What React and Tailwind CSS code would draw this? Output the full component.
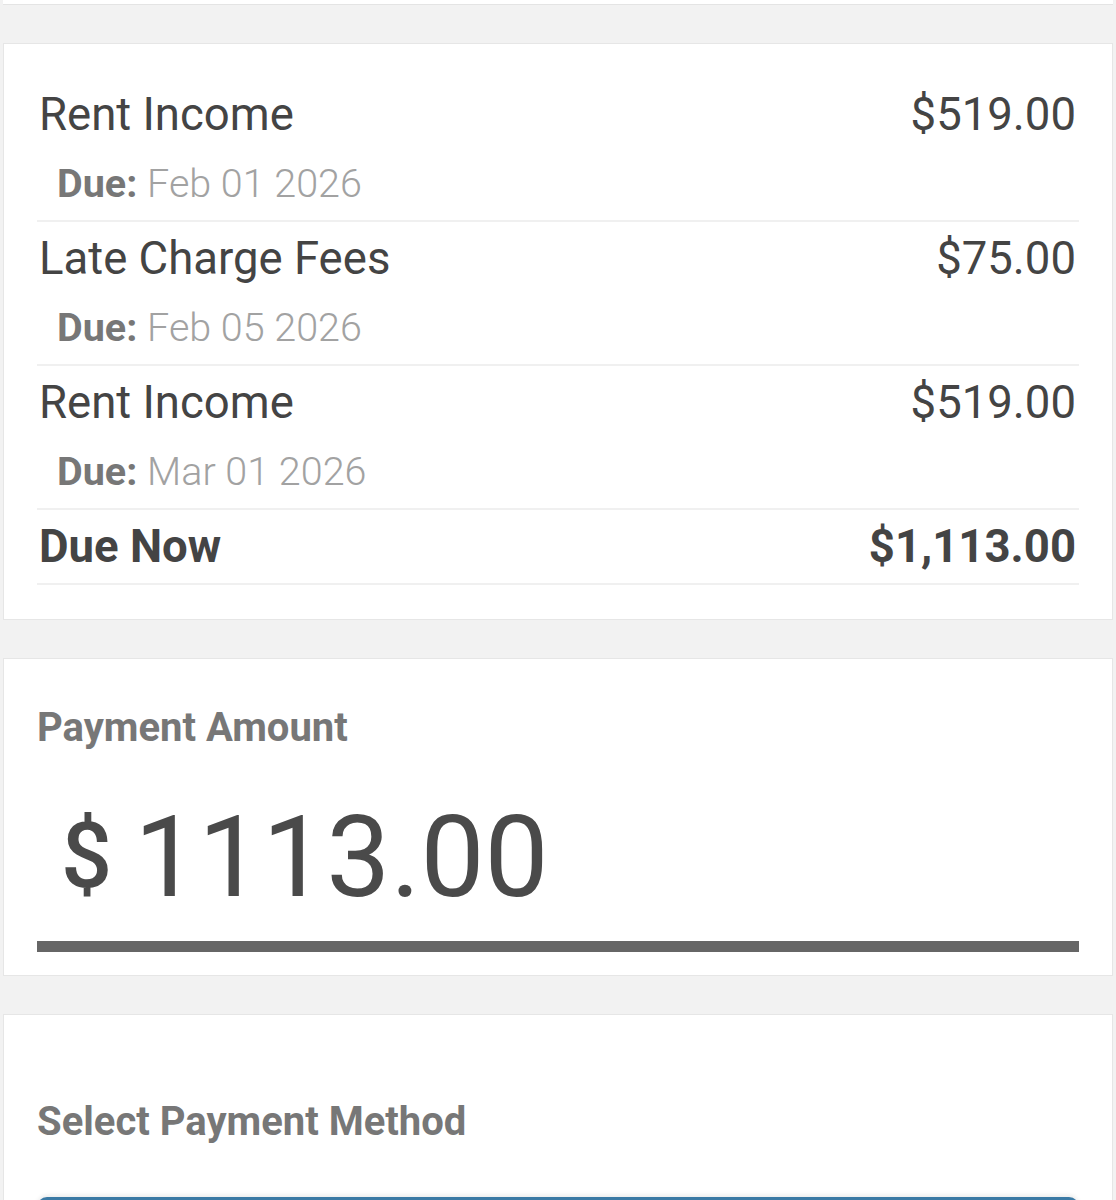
export default function App() {
  const rows = [
    { label: "Rent Income", amount: "$519.00", due: "Feb 01 2026" },
    { label: "Late Charge Fees", amount: "$75.00", due: "Feb 05 2026" },
    { label: "Rent Income", amount: "$519.00", due: "Mar 01 2026" },
  ];
  return (
    <div
      className="min-h-[1200px] bg-[#f2f2f2] text-[#444444]"
      style={{ fontFamily: "Roboto, 'Noto Sans', Arial, sans-serif" }}
    >
      <div className="mx-[3px] h-[5px] border-b border-[#e4e4e4] bg-white" />

      {/* Charges card */}
      <div className="mx-[3px] mt-[38px] border border-[#e6e6e6] bg-white px-[33px] pt-[43px] pb-[34px]">
        {rows.map((r, i) => (
          <div
            key={i}
            className={`border-b-2 border-[#f0f0f0] pb-[8px] ${i === 0 ? "" : "pt-[9px]"}`}
          >
            <div className="flex items-center justify-between pr-[3px] pl-[2px] text-[45.5px] leading-[56px]">
              <span>{r.label}</span>
              <span>{r.amount}</span>
            </div>
            <div className="mt-[13px] pl-[20px] text-[39.5px] leading-[56px]">
              <span className="font-bold text-[#777777]">Due:</span>{" "}
              <span
                className="font-light text-[#a2a2a2]"
                style={{ fontFamily: "'Roboto Light', Roboto, 'Noto Sans', Arial, sans-serif" }}
              >
                {r.due}
              </span>
            </div>
          </div>
        ))}
        <div className="flex items-center justify-between border-b-2 border-[#f0f0f0] pt-[9px] pr-[3px] pb-[8px] pl-[2px] text-[45.5px] font-bold leading-[56px]">
          <span>Due Now</span>
          <span>$1,113.00</span>
        </div>
      </div>

      {/* Payment amount card */}
      <div className="mx-[3px] mt-[38px] border border-[#e6e6e6] bg-white px-[33px] pt-[45px] pb-[23px]">
        <div className="text-[40px] font-bold leading-[48px] text-[#777777]">Payment Amount</div>
        <div className="mt-[48px] flex items-center gap-[22px] pl-[24px] text-[#4a4a4a]">
          <span className="text-[90px] font-medium leading-none">$</span>
          <span className="text-[114px] leading-none">1113.00</span>
        </div>
        <div className="mt-[27px] h-[11px] bg-[#666666]" />
      </div>

      {/* Payment method card */}
      <div className="mx-[3px] mt-[38px] border border-[#e6e6e6] bg-white px-[33px] pt-[83px] pb-[40px]">
        <div className="text-[40px] font-bold leading-[48px] text-[#777777]">Select Payment Method</div>
        <div className="mt-[51px] h-[64px] rounded-[10px] bg-[#3b7aa5] shadow-[0_-2px_4px_rgba(0,0,0,0.08)]" />
      </div>
    </div>
  );
}
